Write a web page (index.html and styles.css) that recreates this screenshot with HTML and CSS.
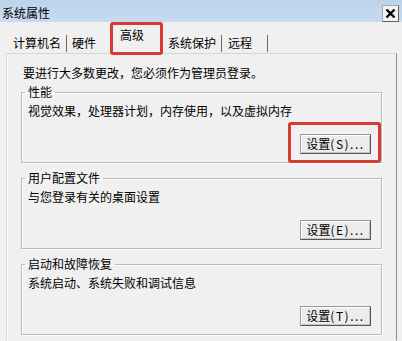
FILE: index.html
```html
<!DOCTYPE html>
<html>
<head>
    <meta charset="utf-8">
    <title>系统属性</title>
    <link rel="stylesheet" href="styles.css">
</head>
<body>
    <div class="titlebar">
        <span class="title">系统属性</span>
        <span class="close-btn">
            <svg width="11" height="11" viewBox="0 0 11 11"><path d="M1.5 1.5 L9.5 9.5 M9.5 1.5 L1.5 9.5" stroke="#000" stroke-width="2.4" fill="none"/></svg>
        </span>
    </div>

    <div class="tabs">
        <span class="tab tab-first">计算机名</span>
        <span class="tab tab-hw">硬件</span>
        <span class="tab tab-active">高级</span>
        <span class="tab tab-protect">系统保护</span>
        <span class="tab tab-remote">远程</span>
    </div>

    <div class="panel">
        <p class="notice">要进行大多数更改，您必须作为管理员登录。</p>

        <fieldset class="group">
            <legend>性能</legend>
            <p class="desc">视觉效果，处理器计划，内存使用，以及虚拟内存</p>
            <div class="actions">
                <span class="mark"><button>设置<span class="key">(S)...</span></button></span>
            </div>
        </fieldset>

        <fieldset class="group">
            <legend>用户配置文件</legend>
            <p class="desc">与您登录有关的桌面设置</p>
            <div class="actions">
                <button>设置<span class="key">(E)...</span></button>
            </div>
        </fieldset>

        <fieldset class="group">
            <legend>启动和故障恢复</legend>
            <p class="desc">系统启动、系统失败和调试信息</p>
            <div class="actions">
                <button>设置<span class="key">(T)...</span></button>
            </div>
        </fieldset>
    </div>
</body>
</html>
```

FILE: styles.css
```css
body {
    margin: 0;
    background-color: #f0f0f0;
    font-family: "Noto Sans CJK SC", sans-serif;
    font-size: 12px;
    line-height: 14px;
    color: #000;
    overflow: hidden;
}
.titlebar {
    height: 22px;
    box-sizing: border-box;
    padding: 4px 3px 0 2px;
    display: flex;
    justify-content: space-between;
    align-items: center;
    background: linear-gradient(to bottom, #bcd3eb, #c9dcef);
}
.close-btn {
    width: 17px;
    height: 17px;
    box-sizing: border-box;
    display: flex;
    align-items: center;
    justify-content: center;
    background-color: #f3f3f3;
    border: 1px solid;
    border-color: #a8a8a8 #5e5e5e #5e5e5e #a8a8a8;
}
.tabs {
    height: 31px;
    display: flex;
    align-items: flex-start;
    padding-left: 13px;
}
.tab {
    margin-top: 13px;
    height: 17px;
    padding-top: 1px;
    box-sizing: border-box;
}
.tab-first {
    padding-right: 5px;
    border-right: 1px solid #6a6a6a;
}
.tab-hw {
    padding-left: 5px;
}
.tab-active {
    position: relative;
    margin-top: 0;
    margin-left: 14px;
    width: 53px;
    height: 33px;
    padding: 6px 0 0 10px;
}
.tab-active::after {
    content: "";
    position: absolute;
    top: 0;
    left: 0;
    right: 0;
    bottom: 0;
    border: 3px solid #d63a34;
    border-radius: 3px;
}
.tab-protect {
    padding-left: 5px;
    padding-right: 5px;
    border-right: 1px solid #6a6a6a;
}
.tab-remote {
    padding-left: 6px;
    padding-right: 15px;
    border-right: 1px solid #6a6a6a;
}
.panel {
    margin: 0 5px 0 6px;
    height: 274px;
    padding: 12px 14px 0 14px;
    border: 1px solid;
    border-color: #d6d6d6 #8c8c8c transparent #d6d6d6;
    box-shadow: inset 1px 0 0 #fff;
}
.notice {
    margin: 0;
    padding-left: 2px;
}
.group {
    margin: 8px 0 0;
    padding: 5px 10px 8px 6px;
    min-width: 0;
    border: 1px solid #bcbcbc;
    box-shadow: inset 1px 1px 0 #fff, 1px 1px 0 #fff;
}
.group:first-of-type {
    margin-top: 5px;
}
.group legend {
    padding: 0 3px;
    margin-left: -3px;
    line-height: 14px;
}
.desc {
    margin: 0;
}
.actions {
    margin-top: 16px;
    display: flex;
    justify-content: flex-end;
}
.mark {
    position: relative;
    display: inline-block;
}
.mark::after {
    content: "";
    position: absolute;
    left: -12px;
    right: -10px;
    top: -12px;
    bottom: -9px;
    border: 3px solid #d63a34;
    border-radius: 3px;
}
button {
    display: block;
    width: 71px;
    height: 20px;
    padding: 0;
    font-family: "Noto Sans CJK SC", sans-serif;
    font-size: 12px;
    line-height: 14px;
    color: #000;
    background-color: #ececec;
    border: 1px solid;
    border-color: #9a9a9a #555 #555 #9a9a9a;
    box-shadow: inset 1px 1px 0 #fff, inset -1px -1px 0 #c4c4c4;
}
.key {
    letter-spacing: 1.5px;
}
```
